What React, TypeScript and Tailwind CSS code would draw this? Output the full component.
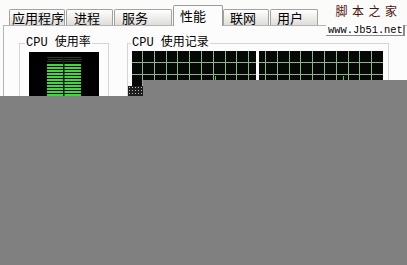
import React from "react";

const tabs = [
  { label: "应用程序", w: "w-[56px]", pl: "pl-[2px]" },
  { label: "进程", w: "w-[47px]", pl: "pl-[7px]" },
  { label: "服务", w: "w-[58px]", pl: "pl-[7px]" },
  { label: "性能", w: "w-[50px]", pl: "pl-[6px]", active: true },
  { label: "联网", w: "w-[46px]", pl: "pl-[6px]" },
  { label: "用户", w: "w-[48px]", pl: "pl-[6px]" },
];

function CpuMeter() {
  const stripes = [];
  for (let y = 12; y < 50; y += 3) {
    stripes.push(<rect key={y} x={18} y={y} width={34} height={2} fill="#3cd83c" />);
  }
  const dots = [];
  for (let y = 5; y < 11; y += 2) {
    for (let x = 18; x < 52; x += 2) {
      dots.push(<rect key={`${x}-${y}`} x={x + ((y / 2) % 2)} y={y} width={1} height={1} fill="#2f8a2f" />);
    }
  }
  return (
    <svg width="70" height="48" className="block">
      <rect width="70" height="48" fill="#000" />
      {dots}
      {stripes}
      <rect x={34} y={5} width={1.5} height={43} fill="#0a200a" />
    </svg>
  );
}

function Graph({ offset, spike }: { offset: number; spike: number }) {
  const lines = [];
  for (let x = offset; x < 124; x += 11.8) {
    lines.push(<line key={"v" + x} x1={Math.round(x) + 0.5} y1={0} x2={Math.round(x) + 0.5} y2={48} stroke="#8fb58f" strokeWidth={1} />);
  }
  for (let y = 11; y < 48; y += 12) {
    lines.push(<line key={"h" + y} x1={0} y1={y + 0.5} x2={124} y2={y + 0.5} stroke="#8fb58f" strokeWidth={1} />);
  }
  return (
    <svg width="124" height="48" className="block">
      <rect width="124" height="48" fill="#050805" />
      {lines}
      <line x1={spike + 0.5} y1={25} x2={spike + 0.5} y2={30} stroke="#3cd83c" strokeWidth={1} />
    </svg>
  );
}

export default function App() {
  return (
    <div
      className="relative w-[407px] h-[265px] overflow-hidden bg-[#fbfbfa] text-black"
      style={{ fontFamily: '"Noto Sans CJK SC", "Liberation Sans", sans-serif' }}
    >
      {/* tabs */}
      <div className="flex items-end h-[25px] pl-[9px]">
        {tabs.map((t) =>
          t.active ? (
            <div
              key={t.label}
              className={`relative z-10 ${t.w} h-[21px] -mb-px bg-[#fcfcfc] border border-b-0 border-[#9a9a98] rounded-t-[2px] ${t.pl} pt-[1px] text-[13px] leading-[18px]`}
            >
              {t.label}
            </div>
          ) : (
            <div
              key={t.label}
              className={`${t.w} h-[16px] mr-px bg-linear-to-b from-white to-[#deddd8] border border-b-0 border-[#a2a2a0] rounded-t-[2px] ${t.pl} text-[13px] leading-[15px]`}
            >
              {t.label}
            </div>
          )
        )}
      </div>

      {/* panel */}
      <div className="ml-[3px] h-[240px] border-t border-l border-[#b4b4b0] bg-[#fcfcfc] pt-[11px] pl-[15px] flex items-start gap-[18px]">
        <fieldset className="w-[90px] h-[80px] border border-[#d6d6d0] pl-[9px]">
          <legend className="-ml-[4px] px-[1px] text-[12px] leading-[12px]" style={{ fontFamily: '"Liberation Mono", "Noto Sans CJK SC", monospace' }}>
            CPU 使用率
          </legend>
          <div className="mt-[3px]">
            <CpuMeter />
          </div>
        </fieldset>
        <fieldset className="w-[262px] h-[80px] border border-[#d6d6d0] pl-[4px]">
          <legend className="-ml-[1px] px-[1px] text-[12px] leading-[12px]" style={{ fontFamily: '"Liberation Mono", "Noto Sans CJK SC", monospace' }}>
            CPU 使用记录
          </legend>
          <div className="mt-[2px] flex gap-[3px]">
            <Graph offset={10} spike={83} />
            <Graph offset={6} spike={84} />
          </div>
        </fieldset>
      </div>

      {/* watermark */}
      <div className="absolute left-[326px] top-[4px] w-[79px] flex flex-col items-center">
        <div className="text-[12px] leading-[14px] tracking-[4.5px] pl-[6px] text-[#4a1010]">脚本之家</div>
        <div
          className="mt-[7px] w-full bg-white border-r-2 border-b border-[#8a8a8a] text-[10.4px] leading-[10px] pl-[2px] whitespace-nowrap"
          style={{ fontFamily: '"Liberation Mono", monospace' }}
        >
          www.Jb51.net
        </div>
      </div>

      {/* grey cover */}
      <div className="absolute left-[128px] top-[86px] w-[15px] h-[10px] bg-[#1c1c1c] [background-image:radial-gradient(#bbb_0.6px,transparent_0.8px)] [background-size:3px_3px]" />
      <div className="absolute left-[143px] top-[80px] right-0 h-[16px] bg-[#808080]" />
      <div className="absolute left-0 top-[96px] right-0 bottom-0 bg-[#808080]" />
    </div>
  );
}
